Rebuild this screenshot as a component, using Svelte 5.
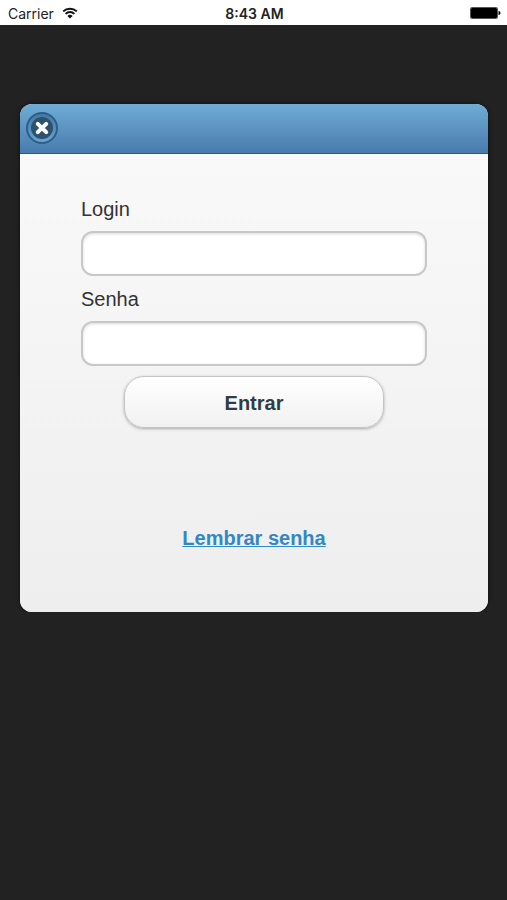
<script lang="ts">
  let login = '';
  let senha = '';
</script>

<div class="screen">
  <div class="status-bar">
    <div class="carrier">
      <span>Carrier</span>
      <svg class="wifi" viewBox="0 0 16 12" aria-hidden="true">
        <path d="M1.2 4.4a9.8 9.8 0 0 1 13.6 0" />
        <path d="M3.6 6.9a6.3 6.3 0 0 1 8.8 0" />
        <path class="dot" d="M8 11.6L5.4 8.9a3.8 3.8 0 0 1 5.2 0z" />
      </svg>
    </div>
    <div class="clock">8:43 AM</div>
    <svg class="battery" viewBox="0 0 31 12" aria-hidden="true">
      <rect class="case" x="0.5" y="0.5" width="27" height="11" rx="1" />
      <rect x="1" y="1" width="26" height="10" rx="1" />
      <path d="M28.5 4a2 2 0 0 1 0 4z" />
    </svg>
  </div>

  <div class="dialog" role="dialog" aria-label="Login">
    <div class="dialog-header">
      <button class="close" type="button" aria-label="Fechar">
        <svg viewBox="0 0 22 22" aria-hidden="true">
          <circle cx="11" cy="11" r="11" />
          <path d="M6.8 6.8l8.4 8.4M15.2 6.8l-8.4 8.4" />
        </svg>
      </button>
    </div>

    <form class="dialog-content" on:submit|preventDefault>
      <label for="login">Login</label>
      <input id="login" type="text" bind:value={login} />
      <label for="senha">Senha</label>
      <input id="senha" type="password" bind:value={senha} />
      <button class="submit" type="submit">Entrar</button>
      <a class="remember" href="#lembrar">Lembrar senha</a>
    </form>
  </div>
</div>

<style>
  :global(body) {
    margin: 0;
    background: #222;
  }

  .screen {
    font-family: 'Liberation Sans', Helvetica, Arial, sans-serif;
    font-size: 20px;
    color: #333;
  }

  .status-bar {
    display: grid;
    grid-template-columns: 1fr auto 1fr;
    align-items: center;
    height: 25px;
    padding: 1px 6px 0 8px;
    box-sizing: border-box;
    background: #fff;
    color: #222;
    font-family: Inter, 'Liberation Sans', sans-serif;
    font-size: 14px;
  }

  .carrier {
    display: flex;
    align-items: center;
    gap: 8px;
  }

  .wifi {
    width: 16px;
    height: 12px;
    fill: none;
    stroke: #111;
    stroke-width: 2;
  }

  .wifi .dot {
    fill: #111;
    stroke: none;
  }

  .clock {
    font-weight: 600;
  }

  .battery {
    justify-self: end;
    width: 31px;
    height: 12px;
    fill: #000;
  }

  .battery .case {
    fill: none;
    stroke: #555;
  }

  .dialog {
    margin: 79px 19px 0 20px;
    border-radius: 12px;
    overflow: hidden;
    box-shadow: 0 0 4px rgba(0, 0, 0, 0.6);
    background: #eee;
  }

  .dialog-header {
    display: flex;
    align-items: center;
    height: 50px;
    padding: 0 6px 2px;
    box-sizing: border-box;
    border-bottom: 1px solid #3b5468;
    background: linear-gradient(#6facd5, #497bae);
  }

  .close {
    display: flex;
    align-items: center;
    justify-content: center;
    width: 32px;
    height: 32px;
    padding: 0;
    border: 2px solid #2a5f8c;
    border-radius: 50%;
    background: linear-gradient(#4579a4, #6aa3cd);
  }

  .close svg {
    width: 22px;
    height: 22px;
    fill: #2b526e;
  }

  .close path {
    stroke: #fff;
    stroke-width: 4;
    stroke-linecap: round;
  }

  .dialog-content {
    display: flex;
    flex-direction: column;
    padding: 42px 61px 60px;
    background: linear-gradient(#f9f9f9, #eee);
  }

  label {
    margin-bottom: 8px;
    line-height: 27px;
  }

  input {
    height: 45px;
    margin: 0 0 10px;
    padding: 0 10px;
    box-sizing: border-box;
    border: 2px solid #c8c8c8;
    border-radius: 12px;
    background: #fff;
    box-shadow: inset 0 1px 3px rgba(0, 0, 0, 0.15);
    font: inherit;
    color: inherit;
  }

  .submit {
    align-self: center;
    width: 75%;
    height: 52px;
    padding: 2px 0 0;
    border: 1px solid #c4c4c4;
    border-radius: 20px;
    background: linear-gradient(#fff, #f1f1f1);
    box-shadow: 0 1px 3px rgba(0, 0, 0, 0.3);
    font: inherit;
    font-weight: bold;
    color: #2f3e46;
  }

  .remember {
    align-self: center;
    margin-top: 96px;
    line-height: 28px;
    font-weight: bold;
    color: #3388c4;
    text-decoration-thickness: 1px;
  }
</style>
